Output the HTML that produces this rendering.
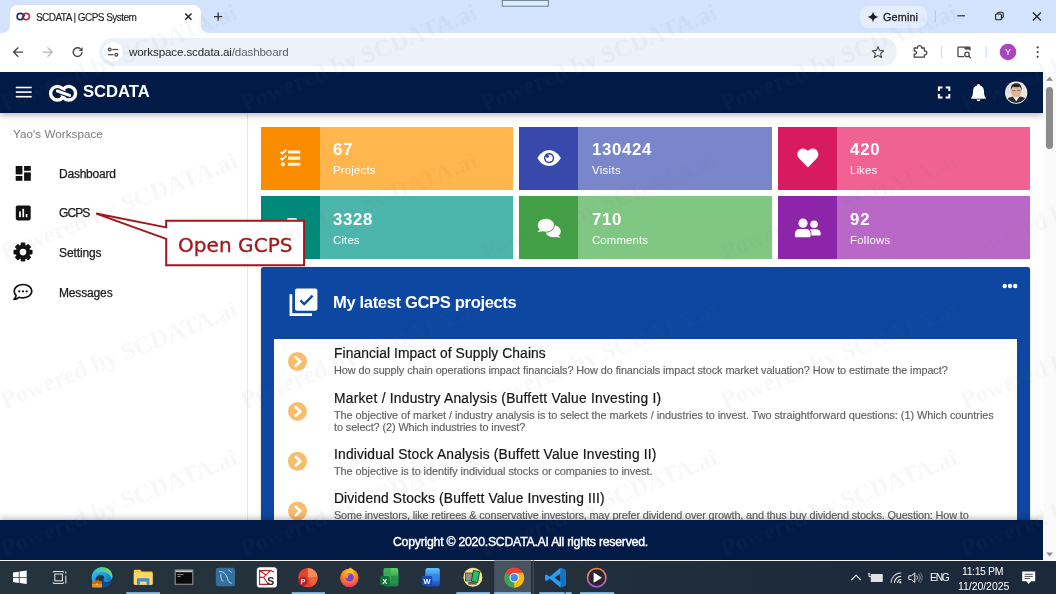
<!DOCTYPE html>
<html lang="en">
<head>
<meta charset="utf-8">
<title>SCDATA | GCPS System</title>
<style>
*{box-sizing:border-box;margin:0;padding:0}
html,body{width:1056px;height:594px;overflow:hidden;background:#fff}
body{position:relative;font-family:"Liberation Sans",sans-serif;color:#222}
.a{position:absolute}
.t{position:absolute;white-space:nowrap;line-height:1;will-change:transform}
svg.ov{position:absolute;left:0;top:0;width:1056px;height:594px;pointer-events:none;overflow:visible}
#tabstrip{left:0;top:0;width:1056px;height:33px;background:#d3e3fd}
#toolbar{left:0;top:32.6px;width:1056px;height:39.4px;background:#fff}
#omni{left:99.4px;top:37.9px;width:797.6px;height:28.4px;border-radius:14.2px;background:#edf2fa}
#gemini{left:859.8px;top:5.5px;width:67.2px;height:22.2px;border-radius:8px;background:#e4edfd}
#apphead{left:0;top:72px;width:1043px;height:40.5px;background:#021b46;box-shadow:0 2px 7px rgba(0,0,0,.3)}
#sidebar{left:0;top:112px;width:247.6px;height:410px;background:#fff;border-right:1px solid #e8e8e8}
#vscroll{left:1043px;top:72px;width:13px;height:488.5px;background:#fafafa}
#vthumb{left:1046.2px;top:87px;width:6.8px;height:62px;border-radius:3.4px;background:#8b8b8b}
.card{position:absolute;height:63.1px;width:251.6px}
.card i{position:absolute;left:0;top:0;width:59px;height:100%}
#panel{left:260.9px;top:266.5px;width:769px;height:260px;background:#0d47a1;border-radius:2.5px 2.5px 0 0;box-shadow:0 1px 3px rgba(0,0,0,.2)}
#list{left:273.8px;top:338.6px;width:743.2px;height:190px;background:#fff}
#footer{left:0;top:519.7px;width:1043px;height:40.8px;background:#021b46;box-shadow:0 -2px 6px rgba(0,0,0,.25)}
#taskbar{left:0;top:560.6px;width:1056px;height:34px;background:linear-gradient(90deg,#25333d 0%,#24313c 45%,#1c2a3b 80%,#1b293a 100%)}
</style>
</head>
<body>
<!-- page content -->
<div id="sidebar" class="a"></div>
<div class="card" style="left:260.9px;top:126.6px;width:251.8px;background:#ffb74d"><i style="background:#fb8c00"></i></div>
<div class="card" style="left:519.3px;top:126.6px;width:252.3px;background:#7986cb"><i style="background:#3949ab"></i></div>
<div class="card" style="left:778.2px;top:126.6px;width:251.7px;background:#f06292"><i style="background:#d81b60"></i></div>
<div class="card" style="left:260.9px;top:196.3px;width:251.8px;background:#4db6ac"><i style="background:#00897b"></i></div>
<div class="card" style="left:519.3px;top:196.3px;width:252.3px;background:#81c784"><i style="background:#43a047"></i></div>
<div class="card" style="left:778.2px;top:196.3px;width:251.7px;background:#ba68c8"><i style="background:#8e24aa"></i></div>
<div id="panel" class="a"></div>
<div id="list" class="a"></div>
<div id="wsname" class="t" style="left:12.80px;top:128.08px;font-size:11.6px;letter-spacing:0.069px;color:#7a7a7a;">Yao's Workspace</div>
<div id="n1" class="t" style="left:59.08px;top:168.04px;font-size:12px;letter-spacing:-0.223px;color:#1a1a1a;-webkit-text-stroke:.25px #1a1a1a;">Dashboard</div>
<div id="n2" class="t" style="left:58.98px;top:207.24px;font-size:12px;letter-spacing:-0.902px;color:#1a1a1a;-webkit-text-stroke:.25px #1a1a1a;">GCPS</div>
<div id="n3" class="t" style="left:58.98px;top:247.04px;font-size:12px;letter-spacing:-0.108px;color:#1a1a1a;-webkit-text-stroke:.25px #1a1a1a;">Settings</div>
<div id="n4" class="t" style="left:58.98px;top:286.54px;font-size:12px;letter-spacing:-0.149px;color:#1a1a1a;-webkit-text-stroke:.25px #1a1a1a;">Messages</div>
<div id="cn0" class="t" style="left:332.89px;top:142.18px;font-size:16.8px;letter-spacing:0.796px;color:#fff;font-weight:bold;">67</div>
<div id="cl0" class="t" style="left:332.72px;top:164.85px;font-size:11.4px;letter-spacing:0.195px;color:#fff;">Projects</div>
<div id="cn1" class="t" style="left:592.09px;top:142.18px;font-size:16.8px;letter-spacing:0.653px;color:#fff;font-weight:bold;">130424</div>
<div id="cl1" class="t" style="left:591.92px;top:164.85px;font-size:11.4px;letter-spacing:0.335px;color:#fff;">Visits</div>
<div id="cn2" class="t" style="left:850.39px;top:142.18px;font-size:16.8px;letter-spacing:0.816px;color:#fff;font-weight:bold;">420</div>
<div id="cl2" class="t" style="left:850.22px;top:164.85px;font-size:11.4px;letter-spacing:0.125px;color:#fff;">Likes</div>
<div id="cn3" class="t" style="left:332.89px;top:211.98px;font-size:16.8px;letter-spacing:0.651px;color:#fff;font-weight:bold;">3328</div>
<div id="cl3" class="t" style="left:332.72px;top:234.65px;font-size:11.4px;letter-spacing:0.153px;color:#fff;">Cites</div>
<div id="cn4" class="t" style="left:592.09px;top:211.98px;font-size:16.8px;letter-spacing:0.650px;color:#fff;font-weight:bold;">710</div>
<div id="cl4" class="t" style="left:591.92px;top:234.65px;font-size:11.4px;letter-spacing:0.141px;color:#fff;">Comments</div>
<div id="cn5" class="t" style="left:850.39px;top:211.98px;font-size:16.8px;letter-spacing:0.896px;color:#fff;font-weight:bold;">92</div>
<div id="cl5" class="t" style="left:850.22px;top:234.65px;font-size:11.4px;letter-spacing:0.285px;color:#fff;">Follows</div>
<div id="ptitle" class="t" style="left:333.20px;top:294.95px;font-size:16.6px;letter-spacing:-0.366px;color:#fff;font-weight:bold;">My latest GCPS projects</div>
<div id="t1" class="t" style="left:333.67px;top:347.22px;font-size:13.8px;letter-spacing:0.098px;color:#151515;-webkit-text-stroke:.2px #151515;">Financial Impact of Supply Chains</div>
<div id="d1" class="t" style="left:333.65px;top:365.37px;font-size:10.9px;letter-spacing:-0.093px;color:#606060;-webkit-text-stroke:.15px #606060;">How do supply chain operations impact financials? How do financials impact stock market valuation? How to estimate the impact?</div>
<div id="t2" class="t" style="left:333.67px;top:391.62px;font-size:13.8px;letter-spacing:0.234px;color:#151515;-webkit-text-stroke:.2px #151515;">Market / Industry Analysis (Buffett Value Investing I)</div>
<div id="d2a" class="t" style="left:333.65px;top:409.87px;font-size:10.9px;letter-spacing:-0.050px;color:#606060;-webkit-text-stroke:.15px #606060;">The objective of market / industry analysis is to select the markets / industries to invest. Two straightforward questions: (1) Which countries</div>
<div id="d2b" class="t" style="left:333.65px;top:421.57px;font-size:10.9px;letter-spacing:-0.105px;color:#606060;-webkit-text-stroke:.15px #606060;">to select? (2) Which industries to invest?</div>
<div id="t3" class="t" style="left:333.67px;top:447.82px;font-size:13.8px;letter-spacing:0.189px;color:#151515;-webkit-text-stroke:.2px #151515;">Individual Stock Analysis (Buffett Value Investing II)</div>
<div id="d3" class="t" style="left:333.65px;top:466.07px;font-size:10.9px;letter-spacing:-0.059px;color:#606060;-webkit-text-stroke:.15px #606060;">The objective is to identify individual stocks or companies to invest.</div>
<div id="t4" class="t" style="left:333.67px;top:492.32px;font-size:13.8px;letter-spacing:0.146px;color:#151515;-webkit-text-stroke:.2px #151515;">Dividend Stocks (Buffett Value Investing III)</div>
<div id="d4" class="t" style="left:333.65px;top:510.07px;font-size:10.9px;letter-spacing:-0.151px;color:#606060;-webkit-text-stroke:.15px #606060;">Some investors, like retirees &amp; conservative investors, may prefer dividend over growth, and thus buy dividend stocks. Question: How to</div>
<svg class="ov" viewBox="0 0 1056 594"><g fill="#111"><rect x="15.7" y="166" width="6.7" height="8.4"/><rect x="15.7" y="176.0" width="6.7" height="4.8"/><rect x="24.1" y="166" width="6.7" height="4.8"/><rect x="24.1" y="172.4" width="6.7" height="8.4"/></g>
<rect x="15.8" y="205.5" width="14.9" height="14.9" rx="1.8" fill="#111"/><g fill="#fff"><rect x="19.1" y="211.4" width="1.7" height="5.8"/><rect x="22.4" y="208.8" width="1.7" height="8.4"/><rect x="25.7" y="214.0" width="1.7" height="3.2"/></g>
<g transform="translate(23,252.1)" fill="#111"><rect x="-2.3" y="-9.5" width="4.6" height="19" rx="0.8" transform="rotate(0)"/><rect x="-2.3" y="-9.5" width="4.6" height="19" rx="0.8" transform="rotate(45)"/><rect x="-2.3" y="-9.5" width="4.6" height="19" rx="0.8" transform="rotate(90)"/><rect x="-2.3" y="-9.5" width="4.6" height="19" rx="0.8" transform="rotate(135)"/><circle r="7.3"/><circle r="3.3" fill="#fff"/></g>
<path d="M23 284.5 C28.1 284.5 31.8 287.5 31.8 291.2 C31.8 294.9 28.1 297.9 23 297.9 C21.6 297.9 20.3 297.7 19.1 297.3 C17.8 298.3 16 299.3 14 299.3 C15.2 298.1 15.9 296.7 16.1 295.6 C14.9 294.4 14.2 292.9 14.2 291.2 C14.2 287.5 17.9 284.5 23 284.5 Z" fill="none" stroke="#111" stroke-width="1.7" stroke-linejoin="round"/><g fill="#111"><circle cx="19.3" cy="291.3" r="1.15"/><circle cx="23" cy="291.3" r="1.15"/><circle cx="26.7" cy="291.3" r="1.15"/></g>
<g fill="#fff6e3"><rect x="288" y="150.5" width="12.3" height="3.1" rx=".5"/><rect x="288" y="156.6" width="12.3" height="3.1" rx=".5"/><rect x="288" y="162.7" width="12.3" height="3.1" rx=".5"/><circle cx="282.9" cy="164.3" r="2.1"/></g><g fill="none" stroke="#fff6e3" stroke-width="1.9"><path d="M280.6 151.9 L282.3 153.6 L286.3 149.6"/><path d="M280.6 158 L282.3 159.7 L286.3 155.7"/></g>
<path d="M537.4 158.1 C540.5 152.6 544.6 150.2 549.1 150.2 C553.6 150.2 557.7 152.6 560.8 158.1 C557.7 163.6 553.6 166 549.1 166 C544.6 166 540.5 163.6 537.4 158.1 Z" fill="#fff"/><circle cx="549.1" cy="158.1" r="5.1" fill="#2c3a97"/><circle cx="549.1" cy="158.1" r="3.7" fill="#fff"/><circle cx="547.4" cy="156.3" r="1.5" fill="#2c3a97"/>
<path d="M807.9 167.4 L799.2 158.6 C796.6 155.9 796.9 151.8 799.7 149.7 C802.2 147.8 805.6 148.4 807.9 151.1 C810.2 148.4 813.6 147.8 816.1 149.7 C818.9 151.8 819.2 155.9 816.6 158.6 Z" fill="#fff"/>
<rect x="287" y="218" width="10" height="6" rx="1.5" fill="#fff"/>
<ellipse cx="553.2" cy="231.2" rx="7.6" ry="6.1" fill="#fff"/><path d="M556.5 234.5 L560.8 237.4 L554 236.9 Z" fill="#fff"/><ellipse cx="545.9" cy="225.4" rx="8.9" ry="7.3" fill="#43a047"/><ellipse cx="545.9" cy="225.2" rx="8.1" ry="6.5" fill="#fff"/><path d="M540.5 228.5 L537.5 232 L544 231 Z" fill="#fff"/>
<g fill="#fff"><circle cx="814.1" cy="224.3" r="3.8"/><path d="M807.5 235.6 V233.4 C807.5 231 809.3 229.3 811.6 229.3 H816.5 C818.9 229.3 820.7 231 820.7 233.4 V234.4 C820.7 235.1 820.2 235.6 819.5 235.6 Z"/></g><path d="M794 237.4 V233.6 C794 230.7 796.2 228.3 799.2 228.3 H806.2 C809.2 228.3 811.4 230.7 811.4 233.6 V237.4 Z" fill="#8e24aa"/><g fill="#fff"><circle cx="803" cy="223.2" r="4.6"/><path d="M794.9 235.7 V233.8 C794.9 231.1 796.9 229 799.6 229 H806 C808.7 229 810.6 231.1 810.6 233.8 V235.7 C810.6 236.6 809.9 237.3 809 237.3 H796.5 C795.6 237.3 794.9 236.6 794.9 235.7 Z"/></g>
<rect x="295" y="288.5" width="22.4" height="22.3" rx="2.2" fill="#fff"/><path d="M300.4 300.4 L304.2 304.1 L312.6 295.6" fill="none" stroke="#0d47a1" stroke-width="2.3"/><path d="M290.9 294.2 V314.6 H312" fill="none" stroke="#fff" stroke-width="2.7"/>
<g fill="#fff"><circle cx="1004.7" cy="286" r="2.2"/><circle cx="1010" cy="286" r="2.2"/><circle cx="1015.2" cy="286" r="2.2"/></g>
<circle cx="297.5" cy="361.5" r="9.5" fill="#f8bd6c"/><path d="M295 356.4 L300.2 361.5 L295 366.6" fill="none" stroke="#fff" stroke-width="2.7"/>
<circle cx="297.5" cy="411.4" r="9.5" fill="#f8bd6c"/><path d="M295 406.3 L300.2 411.4 L295 416.5" fill="none" stroke="#fff" stroke-width="2.7"/>
<circle cx="297.5" cy="461.2" r="9.5" fill="#f8bd6c"/><path d="M295 456.1 L300.2 461.2 L295 466.3" fill="none" stroke="#fff" stroke-width="2.7"/>
<circle cx="297.5" cy="511.0" r="9.5" fill="#f8bd6c"/><path d="M295 505.9 L300.2 511.0 L295 516.1" fill="none" stroke="#fff" stroke-width="2.7"/></svg>
<!-- app header / footer / scrollbar -->
<div id="apphead" class="a"></div>
<div id="footer" class="a"></div>
<div id="vscroll" class="a"></div>
<div id="vthumb" class="a"></div>
<div id="brand" class="t" style="left:82.80px;top:83.75px;font-size:16.6px;letter-spacing:-0.007px;color:#fff;font-weight:bold;">SCDATA</div>
<div id="copy" class="t" style="left:393.26px;top:535.99px;font-size:12.3px;letter-spacing:-0.257px;color:#fff;-webkit-text-stroke:.4px #fff;">Copyright © 2020.SCDATA.AI All rights reserved.</div>
<svg class="ov" viewBox="0 0 1056 594"><g fill="#fff"><rect x="15.8" y="86.7" width="15.9" height="1.6"/><rect x="15.8" y="91.3" width="15.9" height="1.6"/><rect x="15.8" y="95.9" width="15.9" height="1.6"/></g>
<g fill="none" stroke="#fff" stroke-width="3.4"><circle cx="57.45" cy="93.2" r="6.85"/><circle cx="68.75" cy="93.2" r="6.85"/></g><path d="M57.9 91.2 L68.3 94.9" stroke="#021b46" stroke-width="5.2"/><path d="M57.4 91 L69.6 95.4" stroke="#fff" stroke-width="3" stroke-linecap="round"/>
<g fill="none" stroke="#fff" stroke-width="2"><path d="M938.9 91 V87.4 H942.5"/><path d="M945.7 87.4 H949.3 V91"/><path d="M949.3 93.9 V97.5 H945.7"/><path d="M942.5 97.5 H938.9 V93.9"/></g>
<path d="M978.5 84 C979.4 84 980 84.7 980 85.5 C982.6 86.2 984 88.4 984 91.2 C984 94.5 984.6 96.2 985.6 97.4 C986 97.9 985.7 98.8 984.9 98.8 H972.1 C971.3 98.8 971 97.9 971.4 97.4 C972.4 96.2 973 94.5 973 91.2 C973 88.4 974.4 86.2 977 85.5 C977 84.7 977.6 84 978.5 84 Z" fill="#fff"/><path d="M976.6 99.6 H980.4 C980.4 100.6 979.6 101.3 978.5 101.3 C977.4 101.3 976.6 100.6 976.6 99.6 Z" fill="#fff"/>
<defs><clipPath id="avc"><circle cx="1016.2" cy="92.7" r="10.4"/></clipPath></defs><circle cx="1016.2" cy="92.7" r="11.1" fill="#fff"/><g clip-path="url(#avc)"><rect x="1005" y="81" width="23" height="23" fill="#e9e6e4"/><path d="M1005 104 V100 C1008 97.5 1011 97 1012.5 96.5 L1016.3 100.5 L1020 96.5 C1022 97 1025 97.5 1028 100 V104 Z" fill="#2b2c33"/><path d="M1014 97 L1016.3 101.5 L1018.6 97 Z" fill="#fff"/><ellipse cx="1016.2" cy="91.3" rx="5.1" ry="6.3" fill="#e2b49a"/><path d="M1010.8 90.5 C1010.3 85.5 1013 83.2 1016.3 83.2 C1019.6 83.2 1022.2 85.5 1021.7 90.5 C1021.2 88 1020.2 86.9 1019.3 86.7 C1017.5 87.4 1014.5 87.3 1013.1 86.8 C1012.3 87.2 1011.3 88.2 1010.8 90.5 Z" fill="#2a2422"/><path d="M1012.3 90.6 H1015.4 M1017.2 90.6 H1020.3" stroke="#6b5248" stroke-width=".7"/></g>
<path d="M1046.2 80.8 L1049.6 76.8 L1053 80.8 Z" fill="#8b8b8b"/><path d="M1046.2 552.6 L1049.6 556.6 L1053 552.6 Z" fill="#8b8b8b"/></svg>
<!-- browser chrome -->
<div id="tabstrip" class="a"></div>
<div id="toolbar" class="a"></div>
<div id="omni" class="a"></div>
<div id="gemini" class="a"></div>
<svg class="ov" viewBox="0 0 1056 594"><path d="M2 33 C7 33 10 30 10 25 V13 C10 8.5 13.5 5 18 5 H193 C197.5 5 201 8.5 201 13 V25 C201 30 204 33 209 33 Z" fill="#fff"/>
<rect x="502.3" y="-1" width="46" height="7.2" fill="#d9f0fc" stroke="#6d7f8f" stroke-width="1"/><rect x="502" y="0" width="46.6" height=".9" fill="#6d7f8f"/>
<circle cx="20.3" cy="16.6" r="3.2" fill="none" stroke="#1b2a80" stroke-width="1.6"/><circle cx="26.2" cy="16.6" r="3.2" fill="none" stroke="#d3262f" stroke-width="1.6"/><path d="M21.6 18.6 L24.9 14.6" stroke="#1b2a80" stroke-width="1.3"/>
<path d="M185.2 13.4 L191.5 19.8 M191.5 13.4 L185.2 19.8" stroke="#1f1f1f" stroke-width="1.4"/>
<path d="M214 16.7 H222.3 M218.15 12.6 V20.8" stroke="#333" stroke-width="1.3"/>
<path d="M873 11.6 C873.8 15.1 875 16.2 878.5 17 C875 17.8 873.8 18.9 873 22.4 C872.2 18.9 871 17.8 867.5 17 C871 16.2 872.2 15.1 873 11.6 Z" fill="#1f1f1f"/>
<rect x="934.8" y="10.5" width="1" height="12" fill="#a8c4f5"/>
<path d="M957.3 15.8 H965" stroke="#1f1f1f" stroke-width="1.1"/>
<g fill="none" stroke="#1f1f1f" stroke-width="1.1"><rect x="995.6" y="14" width="5.8" height="5.8" rx="1"/><path d="M997.6 14 V13.4 C997.6 12.7 998.1 12.2 998.8 12.2 H1002 C1002.7 12.2 1003.2 12.7 1003.2 13.4 V16.8 C1003.2 17.5 1002.7 18 1002 18 H1001.4"/></g>
<path d="M1032.9 12.5 L1040.9 20.5 M1040.9 12.5 L1032.9 20.5" stroke="#1f1f1f" stroke-width="1.2"/>
<g fill="none" stroke="#474747" stroke-width="1.4"><path d="M23 52.1 H14 M18.3 47.4 L13.6 52.1 L18.3 56.8"/></g>
<g fill="none" stroke="#b5b5b5" stroke-width="1.3"><path d="M42.8 52.1 H51.8 M47.5 47.4 L52.2 52.1 L47.5 56.8"/></g>
<g fill="none" stroke="#474747" stroke-width="1.4"><path d="M82 52.1 A4.4 4.4 0 1 1 80.5 48.8"/></g><path d="M82.6 47 V51 H78.6 Z" fill="#474747"/>
<circle cx="113" cy="52" r="10" fill="#fff"/>
<g fill="none" stroke="#474747" stroke-width="1.2"><circle cx="109.7" cy="49.5" r="1.4"/><path d="M112.3 49.5 H118"/><path d="M108 54.7 H113.6"/><circle cx="116.3" cy="54.7" r="1.4"/></g>
<path d="M878 46.6 L879.6 50.4 L883.6 50.8 L880.6 53.5 L881.5 57.5 L878 55.4 L874.5 57.5 L875.4 53.5 L872.4 50.8 L876.4 50.4 Z" fill="none" stroke="#474747" stroke-width="1.1" stroke-linejoin="round"/>
<path d="M914.2 48 H917.6 C917.3 46.2 918.6 45.6 919.6 45.6 C920.6 45.6 921.9 46.2 921.6 48 H924.4 V51 C926.3 50.7 926.8 52 926.8 52.9 C926.8 53.8 926.3 55.1 924.4 54.8 V57.2 H914.2 V54.2 C915.9 54.4 916.5 53.5 916.5 52.6 C916.5 51.7 915.9 50.8 914.2 51 Z" fill="none" stroke="#474747" stroke-width="1.3" stroke-linejoin="round"/>
<rect x="940.9" y="46" width="1" height="12" fill="#c5d8f7"/><rect x="985.6" y="46" width="1" height="12" fill="#c5d8f7"/>
<g fill="none" stroke="#474747" stroke-width="1.3"><path d="M964 56.6 H958.6 C958.2 56.6 958 56.4 958 56 V47.8 C958 47.4 958.2 47.2 958.6 47.2 H969.4 C969.8 47.2 970 47.4 970 47.8 V50.4"/><circle cx="967" cy="54.4" r="2.2"/><path d="M968.6 56 L970.8 58.2"/></g><rect x="964.5" y="47.2" width="5.5" height="2.4" fill="#474747"/>
<circle cx="1008" cy="52" r="8.3" fill="#ab47bc"/><text x="1008" y="55.3" font-family="Liberation Sans, sans-serif" font-size="9" fill="#fff" text-anchor="middle">Y</text>
<g fill="#474747"><circle cx="1037.7" cy="47.4" r="1.1"/><circle cx="1037.7" cy="52.1" r="1.1"/><circle cx="1037.7" cy="56.8" r="1.1"/></g></svg>
<div id="tabtitle" class="t" style="left:35.70px;top:12.73px;font-size:10.0px;letter-spacing:-0.547px;color:#1f1f1f;-webkit-text-stroke:.15px #1f1f1f;">SCDATA | GCPS System</div>
<div id="gem" class="t" style="left:882.55px;top:12.26px;font-size:10.8px;letter-spacing:0.162px;color:#1f1f1f;-webkit-text-stroke:.3px #1f1f1f;">Gemini</div>
<div id="url" class="t" style="left:129.00px;top:46.48px;font-size:11.6px;letter-spacing:-0.120px;color:#1f1f1f;">workspace.scdata.ai<span style="color:#5e6166">/dashboard</span></div>
<!-- taskbar -->
<div id="taskbar" class="a"></div>
<svg class="ov" viewBox="0 0 1056 594"><defs><linearGradient id="gEdge" x1="0" y1="0" x2="1" y2="1"><stop offset="0" stop-color="#35c1f1"/><stop offset=".5" stop-color="#1b9de2"/><stop offset="1" stop-color="#0c59a4"/></linearGradient><linearGradient id="gEdge2" x1="0" y1="0" x2="1" y2="0"><stop offset="0" stop-color="#2cc3d5"/><stop offset="1" stop-color="#6fdc5b"/></linearGradient><radialGradient id="gFx" cx=".5" cy=".3" r=".8"><stop offset="0" stop-color="#ffde3f"/><stop offset=".45" stop-color="#ff8a16"/><stop offset="1" stop-color="#e31587"/></radialGradient><linearGradient id="gMp" x1="0" y1="0" x2="0" y2="1"><stop offset="0" stop-color="#f08a3c"/><stop offset="1" stop-color="#a35bd6"/></linearGradient><linearGradient id="gXl" x1="0" y1="0" x2="0" y2="1"><stop offset="0" stop-color="#5fd068"/><stop offset="1" stop-color="#17803d"/></linearGradient><linearGradient id="gWd" x1="0" y1="0" x2="0" y2="1"><stop offset="0" stop-color="#5fc3ff"/><stop offset="1" stop-color="#1447c0"/></linearGradient></defs>
<rect x="494.2" y="560.4" width="36.8" height="33.6" fill="#47535e"/><rect x="532.6" y="560.4" width="1.6" height="33.6" fill="#3a4651"/>
<rect x="126.3" y="592.2" width="33.7" height="1.8" fill="#8cc4ee"/>
<rect x="291.7" y="592.2" width="33.3" height="1.8" fill="#8cc4ee"/>
<rect x="456.3" y="592.2" width="33.7" height="1.8" fill="#8cc4ee"/>
<rect x="494.2" y="592.2" width="36.8" height="1.8" fill="#8cc4ee"/>
<rect x="539.2" y="592.2" width="25.4" height="1.8" fill="#8cc4ee"/>
<rect x="565.6" y="592.2" width="6.1" height="1.8" fill="#8cc4ee"/>
<rect x="580" y="592.2" width="34.2" height="1.8" fill="#8cc4ee"/>
<g fill="#fff"><path d="M13 572.5 L18.8 571.7 V576.9 H13 Z"/><path d="M19.6 571.6 L26.7 570.6 V576.9 H19.6 Z"/><path d="M13 577.7 H18.8 V582.9 L13 582.1 Z"/><path d="M19.6 577.7 H26.7 V584 L19.6 583 Z"/></g>
<g fill="none" stroke="#e8e8e8" stroke-width="1"><rect x="54.8" y="574" width="7.6" height="6.8"/><path d="M53.3 571.5 H63.4 M53.3 583.4 H63.4 M53.3 571.5 V572.6 M63.4 571.5 V572.6 M53.3 583.4 V582.3 M63.4 583.4 V582.3"/><path d="M65.8 571.4 V573.6 M65.8 575.6 V583.6"/></g>
<path d="M102 567.3 C108 567.3 112.4 571.6 112.4 576.6 C112.4 580.3 109.6 582.4 106.6 582.4 C104.6 582.4 103.4 581.4 103.4 580.2 C103.4 579.2 104.2 578.9 104.2 577.6 C104.2 576 102.8 574.7 100.7 574.7 C97.8 574.7 95.4 577.3 95.4 580.6 C95.4 584.6 98.8 587.6 103 587.6 C97 588.6 91.7 584 91.7 577.7 C91.7 571.9 96.2 567.3 102 567.3 Z" fill="url(#gEdge)"/><path d="M93 573.5 C95 569.5 98.5 567.3 102.5 567.3 C108.2 567.3 112.4 571.4 112.4 576.4 C112.4 577.4 112.2 578.3 111.8 579.2 C111.5 575.3 107.5 572 102.5 572 C98.5 572 95 573 93 573.5 Z" fill="url(#gEdge2)"/><path d="M103 587.6 C107 587.6 110.5 585.3 111.9 581.5 C110.4 582.6 108.6 583.1 106.8 583 C104.3 582.9 102.8 581.6 103.2 579.7 C100.5 581 100 585.5 103 587.6 Z" fill="#114a8b"/><rect x="92" y="581.4" width="10" height="6.2" rx=".8" fill="#e8912c"/><rect x="92" y="581.4" width="10" height="2.6" rx=".8" fill="#c96a14"/><rect x="95.2" y="580.2" width="3.6" height="1.6" fill="none" stroke="#c96a14" stroke-width=".8"/><rect x="96.4" y="583.4" width="1.3" height="1.3" fill="#ffe08a"/>
<path d="M133.8 571 C133.8 570.3 134.3 569.8 135 569.8 H140.4 L141.8 571.6 H151.4 C152.1 571.6 152.6 572.1 152.6 572.8 V583.6 C152.6 584.3 152.1 584.8 151.4 584.8 H135 C134.3 584.8 133.8 584.3 133.8 583.6 Z" fill="#f7c84b"/><rect x="133.8" y="573" width="18.8" height="11.8" rx="1" fill="#fbd768"/><path d="M137 584.8 V579.4 C137 578.7 137.5 578.2 138.2 578.2 H148.2 C148.9 578.2 149.4 578.7 149.4 579.4 V584.8 H146.6 V581.4 H139.8 V584.8 Z" fill="#3f8fd6"/>
<rect x="175.2" y="570" width="17.6" height="14.2" fill="#0a0a0a" stroke="#9b9b9b" stroke-width="1"/><rect x="175.7" y="570.4" width="16.6" height="1.8" fill="#c9c9c9"/><path d="M177.4 574.6 H183.4 M177.4 576.6 H180.6" stroke="#bdbdbd" stroke-width=".8"/>
<rect x="215.8" y="567.7" width="19.2" height="18.6" rx="2.2" fill="#34709f"/><path d="M219 571.6 C223 571 226.5 574 227.5 578.6 C228 581 229.3 582.6 231.6 583.4 M221 573.8 C220.4 577 221.4 580.2 223.2 581.6 M228.4 569.8 L231.6 572.6" fill="none" stroke="#d5e4f0" stroke-width=".9"/>
<rect x="256.8" y="567.3" width="20.2" height="20.3" rx="3.4" fill="#fff"/><path d="M259.6 570.6 H270.6 L263.6 577.4 L268.4 584.4 H259.6 V570.6 L266 575 M259.6 577.4 H263.6 M270.6 570.6 L274 572" fill="none" stroke="#b3262b" stroke-width="1.1"/><text x="267.2" y="585" font-family="Liberation Sans, sans-serif" font-size="10.5" font-weight="bold" fill="#2a2a2a">S</text>
<circle cx="307.9" cy="577.6" r="9.7" fill="#e0452c"/><path d="M307.9 567.9 A9.7 9.7 0 0 1 317.6 577.6 H307.9 Z" fill="#fb8a5a"/><path d="M307.9 577.6 H317.6 A9.7 9.7 0 0 1 312 586.4 Z" fill="#f2603c"/><circle cx="303" cy="581.4" r="4.6" fill="#b7202e"/><text x="303" y="584.2" font-family="Liberation Sans, sans-serif" font-size="7.4" font-weight="bold" fill="#fff" text-anchor="middle">P</text>
<circle cx="349.4" cy="577.8" r="9.3" fill="url(#gFx)"/><path d="M347 570.6 C348.6 569.6 349.6 568.6 350.2 567.4 C352.4 568.6 353.6 570.6 353.8 572.6 Z" fill="#ffbd2e"/><circle cx="349.6" cy="577.4" r="4.2" fill="#7b3fd1"/><path d="M344.8 575.4 C346.4 574 349 573.8 350.6 574.8 C348.6 575 347.4 576.4 347.8 578.2 C346 578.2 344.8 577 344.8 575.4 Z" fill="#ff9a1f"/>
<rect x="383.6" y="568" width="14.8" height="18.6" rx="2" fill="url(#gXl)"/><rect x="383.6" y="568" width="7" height="7.6" fill="#2fa653" opacity=".75"/><rect x="391" y="575.6" width="7.4" height="5.4" fill="#1c8f45" opacity=".7"/><rect x="380" y="576" width="9.6" height="9.2" rx="1.6" fill="#10703a"/><text x="384.8" y="583.6" font-family="Liberation Sans, sans-serif" font-size="7.6" font-weight="bold" fill="#fff" text-anchor="middle">X</text>
<rect x="425.4" y="568" width="14.4" height="18.6" rx="2" fill="url(#gWd)"/><rect x="425.4" y="574.2" width="14.4" height="6.2" fill="#2f83e6" opacity=".8"/><rect x="421.8" y="576" width="10.4" height="9.2" rx="1.6" fill="#1d4bb5"/><text x="427" y="583.6" font-family="Liberation Sans, sans-serif" font-size="7.4" font-weight="bold" fill="#fff" text-anchor="middle">W</text>
<circle cx="472.9" cy="577.3" r="10" fill="#efe590" stroke="#2b2b20" stroke-width=".9"/><rect x="465.4" y="573" width="7" height="8" fill="#8d8f86" stroke="#33342e" stroke-width=".7"/><path d="M473.4 570.4 L479.6 571.8 L477.6 582.6 L471.4 581.2 Z" fill="#23c26a" stroke="#25352b" stroke-width=".9"/><rect x="468.2" y="582" width="8.4" height="2.6" fill="#5f615a"/>
<circle cx="514.2" cy="577.7" r="10" fill="#ea4335"/><path d="M514.2 577.7 L505.54 572.7 A10 10 0 0 0 514.2 587.7 L518.5 580.2 Z" fill="#34a853"/><path d="M514.2 577.7 L514.2 587.7 A10 10 0 0 0 522.86 572.7 L514.2 572.7 Z" fill="#fbbc05"/><path d="M505.54 572.7 A10 10 0 0 1 522.86 572.7 L514.2 572.7 Z" fill="#ea4335"/><circle cx="514.2" cy="577.7" r="4.7" fill="#fff"/><circle cx="514.2" cy="577.7" r="3.7" fill="#4285f4"/>
<path d="M560.4 567.8 L565.8 570.2 V585.2 L560.4 587.6 L549.6 578.6 L546.6 581 L545 580.2 V575.2 L546.6 574.4 L549.6 576.8 Z M560.4 573.4 L554.4 577.7 L560.4 582 Z" fill="#2a9df4" fill-rule="evenodd"/><path d="M560.4 567.8 L565.8 570.2 V585.2 L560.4 587.6 Z" fill="#1273c4"/>
<circle cx="596.7" cy="577.7" r="9.2" fill="#2a2430" stroke="url(#gMp)" stroke-width="1.7"/><path d="M593.6 572.6 L602 577.7 L593.6 582.8 Z" fill="#fff"/>
<path d="M851.4 580 L856.1 575.2 L860.8 580" fill="none" stroke="#f2f2f2" stroke-width="1.1"/>
<rect x="871.2" y="574.6" width="11" height="6.8" fill="#dfe3e6" stroke="#f2f2f2" stroke-width=".9"/><path d="M869 572.8 V576.6 H871 M868.4 574 H869.8" fill="none" stroke="#f2f2f2" stroke-width="1"/>
<g fill="none" stroke="#f2f2f2" stroke-width="1.1"><path d="M891 583 A10.2 10.2 0 0 1 901.2 572.9" opacity=".75"/><path d="M894.4 583 A6.8 6.8 0 0 1 901.2 576.3"/><path d="M897.6 583 A3.6 3.6 0 0 1 901.2 579.5"/></g><circle cx="900.3" cy="582.3" r="1.1" fill="#f2f2f2"/>
<path d="M908.8 575.8 H911.4 L914.8 572.9 V582.4 L911.4 579.5 H908.8 Z" fill="none" stroke="#f2f2f2" stroke-width="1"/><g fill="none" stroke="#f2f2f2" stroke-width=".9"><path d="M916.6 575.6 A2.8 2.8 0 0 1 916.6 579.8"/><path d="M918.4 573.8 A5.2 5.2 0 0 1 918.4 581.6" opacity=".7"/><path d="M920 572.4 A7.4 7.4 0 0 1 920 583" opacity=".4"/></g>
<path d="M1022.2 571.4 H1035.2 V581.2 H1031 L1028.7 584 L1026.4 581.2 H1022.2 Z" fill="#fff"/><path d="M1024.6 574.3 H1032.8 M1024.6 576.4 H1032.8 M1024.6 578.5 H1030" stroke="#1d2836" stroke-width=".8"/></svg>
<div id="eng" class="t" style="left:930.38px;top:573.08px;font-size:10.3px;letter-spacing:-1.230px;color:#fff;">ENG</div>
<div id="time" class="t" style="left:962.37px;top:565.71px;font-size:10.5px;letter-spacing:-0.389px;color:#fff;">11:15 PM</div>
<div id="date" class="t" style="left:958.17px;top:580.71px;font-size:10.5px;letter-spacing:-0.052px;color:#fff;">11/20/2025</div>
<!-- callout -->
<svg class="ov" viewBox="0 0 1056 594">
<path d="M166.2 220.7 H304.1 V265.2 H166.2 V238.9 L96.2 213.6 L166.2 227.4 Z" fill="#fff" stroke="#a3161b" stroke-width="2" stroke-linejoin="miter"/>
</svg>
<div id="calltext" class="t" style="left:177.50px;top:235.08px;font-size:20px;letter-spacing:0.067px;color:#a3161b;font-family:'DejaVu Sans','Liberation Sans',sans-serif;-webkit-text-stroke:.3px #a3161b;">Open GCPS</div>
<!-- watermark -->
<svg class="ov" viewBox="0 0 1056 594">
<defs><pattern id="wm" patternUnits="userSpaceOnUse" x="1.7" y="-9" width="240" height="148.5">
<text x="120" y="74.25" text-anchor="middle" transform="rotate(-21.7 120 74.25)" font-family="Liberation Serif, serif" font-weight="bold" font-size="24.6" fill="#707070" fill-opacity=".055">Powered by SCDATA.ai</text>
</pattern></defs>
<rect x="0" y="0" width="1056" height="594" fill="url(#wm)"/>
</svg>
</body>
</html>
